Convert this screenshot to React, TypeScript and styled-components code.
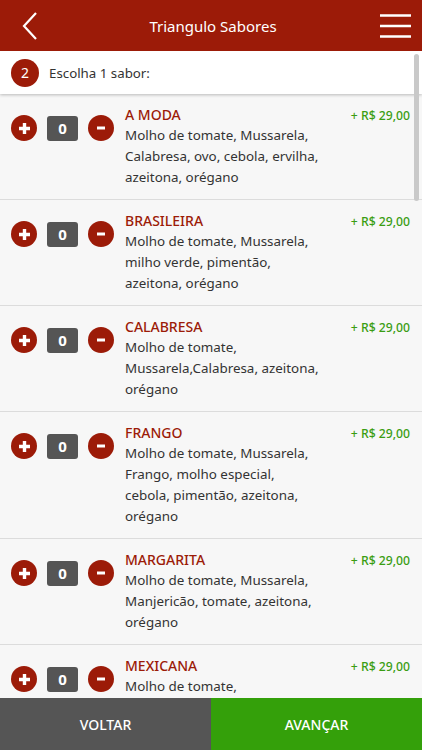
import styled, { createGlobalStyle } from "styled-components";

const GlobalStyle = createGlobalStyle`
  html, body {
    margin: 0;
    padding: 0;
    height: 100%;
  }
  body {
    font-family: "Noto Sans", "Open Sans", sans-serif;
    background: #f7f7f7;
  }
  #root {
    height: 100%;
  }
`;

const Page = styled.div`
  height: 750px;
  display: flex;
  flex-direction: column;
  overflow: hidden;
`;

const Header = styled.header`
  height: 51px;
  flex-shrink: 0;
  background: #9c1b08;
  display: flex;
  align-items: center;
  justify-content: space-between;
  padding: 0 10px 0 14px;
  color: #fff;
`;

const Title = styled.h1`
  margin: 0;
  font-size: 15px;
  font-weight: 400;
  color: #fff;
`;

const IconButton = styled.div`
  width: 32px;
  height: 32px;
  display: flex;
  align-items: center;
  justify-content: center;
`;

const Scroll = styled.div`
  position: relative;
  flex: 1;
  overflow: hidden;
`;

const ScrollThumb = styled.div`
  position: absolute;
  right: 3px;
  top: 3px;
  width: 5px;
  height: 147px;
  border-radius: 3px;
  background: #c9c9c9;
`;

const StepBar = styled.div`
  height: 43px;
  background: #fff;
  display: flex;
  align-items: center;
  gap: 10px;
  padding-left: 11px;
  box-shadow: 0 1px 3px rgba(0, 0, 0, 0.25);
  position: relative;
  font-size: 13.3px;
  color: #333;
`;

const StepBadge = styled.span`
  width: 28px;
  height: 28px;
  border-radius: 50%;
  background: #9c1b08;
  color: #fff;
  display: flex;
  align-items: center;
  justify-content: center;
  font-size: 14px;
`;

const Row = styled.div`
  display: flex;
  padding: 10px 12px 11px 11px;
  border-bottom: 1px solid #dcdcdc;
  background: #f7f7f7;
`;

const Controls = styled.div`
  display: flex;
  align-items: center;
  gap: 10px;
  margin-top: 11px;
  height: 26px;
  flex-shrink: 0;
`;

const RoundButton = styled.span`
  width: 26px;
  height: 26px;
  border-radius: 50%;
  background: #9c1b08;
  color: #fff;
  display: flex;
  align-items: center;
  justify-content: center;
`;

const Count = styled.span`
  width: 31px;
  height: 25px;
  border-radius: 3px;
  background: #555;
  color: #fff;
  font-size: 15px;
  font-weight: 700;
  display: flex;
  align-items: center;
  justify-content: center;
`;

const Info = styled.div`
  flex: 1;
  margin-left: 11px;
  display: flex;
  flex-direction: column;
`;

const TopLine = styled.div`
  display: flex;
  justify-content: space-between;
  align-items: baseline;
  height: 21px;
`;

const Name = styled.span`
  color: #9c1b08;
  font-size: 14px;
  font-weight: 500;
  line-height: 21px;
`;

const Price = styled.span`
  color: #3a9d12;
  font-size: 12.2px;
  font-weight: 500;
  line-height: 21px;
`;

const Desc = styled.p`
  margin: 0;
  font-size: 13.4px;
  line-height: 21px;
  color: #333;
  white-space: nowrap;
`;

const Footer = styled.footer`
  height: 52px;
  flex-shrink: 0;
  display: grid;
  grid-template-columns: 211px 1fr;
`;

const FooterButton = styled.div<{ $green?: boolean }>`
  background: ${(p) => (p.$green ? "#34a00a" : "#555555")};
  color: #fff;
  font-size: 14px;
  font-weight: 500;
  display: flex;
  align-items: center;
  justify-content: center;
`;

interface Flavor {
  name: string;
  desc: string[];
}

const flavors: Flavor[] = [
  { name: "A MODA", desc: ["Molho de tomate, Mussarela,", "Calabresa, ovo, cebola, ervilha,", "azeitona, orégano"] },
  { name: "BRASILEIRA", desc: ["Molho de tomate, Mussarela,", "milho verde, pimentão,", "azeitona, orégano"] },
  { name: "CALABRESA", desc: ["Molho de tomate,", "Mussarela,Calabresa, azeitona,", "orégano"] },
  { name: "FRANGO", desc: ["Molho de tomate, Mussarela,", "Frango, molho especial,", "cebola, pimentão, azeitona,", "orégano"] },
  { name: "MARGARITA", desc: ["Molho de tomate, Mussarela,", "Manjericão, tomate, azeitona,", "orégano"] },
  { name: "MEXICANA", desc: ["Molho de tomate,", "Mussarela, pimenta, azeitona,", "orégano"] },
];

function Plus() {
  return (
    <svg width="13" height="13" viewBox="0 0 13 13">
      <path d="M6.5 1v11M1 6.5h11" stroke="#fff" strokeWidth="3.4" />
    </svg>
  );
}

function Minus() {
  return (
    <svg width="8" height="4" viewBox="0 0 8 4">
      <path d="M0 2h8" stroke="#fff" strokeWidth="3" />
    </svg>
  );
}

function App() {
  return (
    <Page>
      <GlobalStyle />
      <Header>
        <IconButton>
          <svg width="16" height="28" viewBox="0 0 16 28">
            <path d="M14 1L2 14l12 13" stroke="#fff" strokeWidth="2.2" fill="none" />
          </svg>
        </IconButton>
        <Title>Triangulo Sabores</Title>
        <IconButton>
          <svg width="31" height="24" viewBox="0 0 31 24">
            <path d="M0 1.5h31M0 12h31M0 22.5h31" stroke="#fff" strokeWidth="2.4" />
          </svg>
        </IconButton>
      </Header>
      <Scroll>
        <StepBar>
          <StepBadge>2</StepBadge>
          Escolha 1 sabor:
        </StepBar>
        {flavors.map((f) => (
          <Row key={f.name}>
            <Controls>
              <RoundButton>
                <Plus />
              </RoundButton>
              <Count>0</Count>
              <RoundButton>
                <Minus />
              </RoundButton>
            </Controls>
            <Info>
              <TopLine>
                <Name>{f.name}</Name>
                <Price>+ R$ 29,00</Price>
              </TopLine>
              {f.desc.map((d) => (
                <Desc key={d}>{d}</Desc>
              ))}
            </Info>
          </Row>
        ))}
        <ScrollThumb />
      </Scroll>
      <Footer>
        <FooterButton>VOLTAR</FooterButton>
        <FooterButton $green>AVANÇAR</FooterButton>
      </Footer>
    </Page>
  );
}

export default App;
